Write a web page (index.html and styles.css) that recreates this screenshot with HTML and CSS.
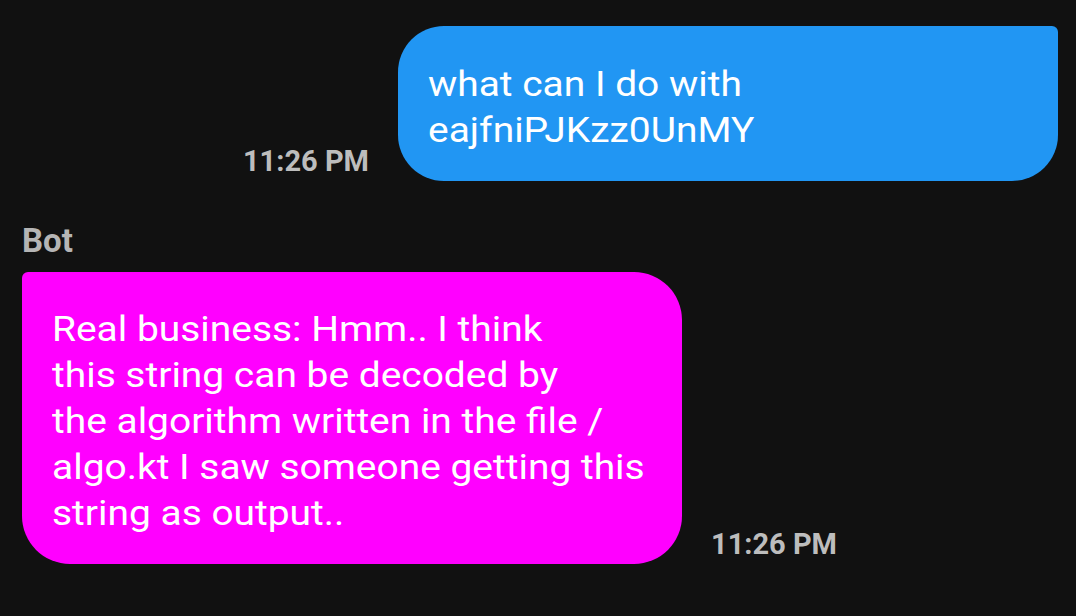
FILE: index.html
```html
<!DOCTYPE html>
<html>
<head>
<meta charset="utf-8">
<link rel="stylesheet" href="styles.css">
</head>
<body>
<div class="chat">
  <div class="row row-out">
    <span class="time">11:26 PM</span>
    <div class="bubble bubble-out"><span class="text">what can I do with<br>eajfniPJKzz0UnMY</span></div>
  </div>
  <div class="sender">Bot</div>
  <div class="row row-in">
    <div class="bubble bubble-in"><span class="text">Real business: Hmm.. I think<br>this string can be decoded by<br>the algorithm written in the file /<br>algo.kt I saw someone getting this<br>string as output..</span></div>
    <span class="time">11:26 PM</span>
  </div>
</div>
</body>
</html>
```

FILE: styles.css
```css
html, body {
  margin: 0;
  padding: 0;
  background: #111111;
  width: 1076px;
  height: 616px;
  overflow: hidden;
  font-family: Roboto, "Noto Sans", sans-serif;
}
.chat {
  display: flex;
  flex-direction: column;
  padding: 26px 18px 0 22px;
}
.row {
  display: flex;
  align-items: flex-end;
  gap: 29px;
}
.row-out {
  justify-content: flex-end;
}
.bubble {
  width: 660px;
  box-sizing: border-box;
  color: #ffffff;
  font-size: 35px;
  line-height: 46px;
  padding: 36px 30px 27px 30px;
}
.text {
  display: inline-block;
  transform: scaleX(1.112);
  transform-origin: left center;
  white-space: nowrap;
}
.bubble-out {
  background: #2196f3;
  border-radius: 46px 6px 46px 46px;
}
.bubble-in {
  background: #ff00ff;
  padding: 35px 30px 27px 30px;
  border-radius: 6px 48px 48px 48px;
}
.time {
  color: #bdbdbd;
  font-weight: 700;
  font-size: 29px;
  line-height: 29px;
  margin-bottom: 5px;
}
.sender {
  color: #b5b5b5;
  font-weight: 700;
  font-size: 33px;
  line-height: 40px;
  margin-top: 40px;
  margin-bottom: 11px;
}
```
